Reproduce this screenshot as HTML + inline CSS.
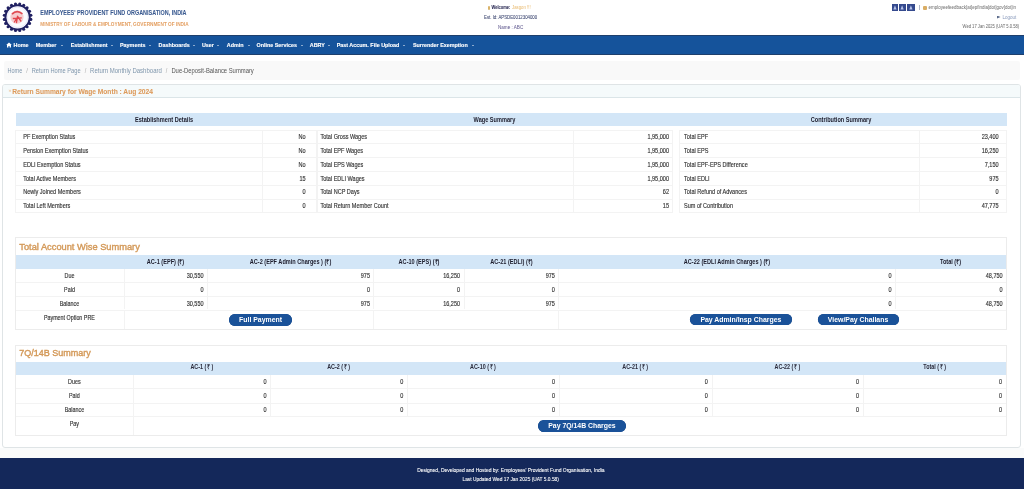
<!DOCTYPE html><html><head><meta charset="utf-8"><title>Due-Deposit-Balance Summary</title><style>
html,body{margin:0;padding:0;}body{width:1024px;height:489px;overflow:hidden;position:relative;background:#fff;font-family:"Liberation Sans", sans-serif;}
.t{position:absolute;white-space:nowrap;}.r{position:absolute;}
</style></head><body><div class="r" style="left:0;top:0;width:1024px;height:489px;will-change:transform">
<svg class="r" style="left:0;top:0" width="36" height="35" viewBox="0 0 36 35"><circle cx="30.84" cy="19.40" r="1.55" fill="#202062"/><circle cx="29.54" cy="23.38" r="1.55" fill="#202062"/><circle cx="27.08" cy="26.78" r="1.55" fill="#202062"/><circle cx="23.68" cy="29.24" r="1.55" fill="#202062"/><circle cx="19.70" cy="30.54" r="1.55" fill="#202062"/><circle cx="15.50" cy="30.54" r="1.55" fill="#202062"/><circle cx="11.52" cy="29.24" r="1.55" fill="#202062"/><circle cx="8.12" cy="26.78" r="1.55" fill="#202062"/><circle cx="5.66" cy="23.38" r="1.55" fill="#202062"/><circle cx="4.36" cy="19.40" r="1.55" fill="#202062"/><circle cx="4.36" cy="15.20" r="1.55" fill="#202062"/><circle cx="5.66" cy="11.22" r="1.55" fill="#202062"/><circle cx="8.12" cy="7.82" r="1.55" fill="#202062"/><circle cx="11.52" cy="5.36" r="1.55" fill="#202062"/><circle cx="15.50" cy="4.06" r="1.55" fill="#202062"/><circle cx="19.70" cy="4.06" r="1.55" fill="#202062"/><circle cx="23.68" cy="5.36" r="1.55" fill="#202062"/><circle cx="27.08" cy="7.82" r="1.55" fill="#202062"/><circle cx="29.54" cy="11.22" r="1.55" fill="#202062"/><circle cx="30.84" cy="15.20" r="1.55" fill="#202062"/><circle cx="17.6" cy="17.3" r="13.1" fill="#202062"/><circle cx="17.6" cy="17.3" r="11.1" fill="#fbfbff"/><circle cx="17.6" cy="17.3" r="10.2" fill="none" stroke="#d6d6ee" stroke-width="0.5"/><circle cx="17.0" cy="17.1" r="6.6" fill="#f6cdd0"/><path d="M12.000000000000002,14.100000000000001 Q17.1,9.100000000000001 22.400000000000002,13.9" fill="none" stroke="#e04a52" stroke-width="1.7"/><path d="M14.100000000000001,22.5 L17.8,16.7 L21.200000000000003,21.5 M12.8,18.5 L21.8,17.900000000000002 M17.6,15.8 L16.400000000000002,23.1" fill="none" stroke="#e2444c" stroke-width="1.3"/></svg>
<div class="t" style="left:40.30px;top:7.80px;font-size:5.45px;line-height:10px;height:10px;color:#3a5a90;font-weight:bold;transform:scaleY(1.18);-webkit-text-stroke:0.05px #3a5a90;">EMPLOYEES&#39; PROVIDENT FUND ORGANISATION, INDIA</div>
<div class="t" style="left:40.30px;top:20.20px;font-size:4.71px;line-height:10px;height:10px;color:#e4a063;font-weight:bold;transform:scaleY(1.18);">MINISTRY OF LABOUR &amp; EMPLOYMENT, GOVERNMENT OF INDIA</div>
<div class="r" style="left:487.50px;top:5.50px;width:2.50px;height:4.00px;background:#d9b36a;border-radius:1px;"></div>
<div class="t" style="left:491.50px;top:3.30px;font-size:4.02px;line-height:10px;height:10px;color:#2b2b55;font-weight:bold;transform:scaleY(1.18);-webkit-text-stroke:0.05px #2b2b55;">Welcome:</div>
<div class="t" style="left:512.00px;top:3.30px;font-size:4.3px;line-height:10px;height:10px;color:#e8b86a;font-weight:normal;transform:scaleY(1.18);">Jasgon !!!</div>
<div class="t" style="left:484.00px;top:13.30px;font-size:4.33px;line-height:10px;height:10px;color:#3c4670;font-weight:normal;transform:scaleY(1.18);-webkit-text-stroke:0.05px #3c4670;">Est. Id: APSDE0012304000</div>
<div class="t" style="left:498.00px;top:22.60px;font-size:4.58px;line-height:10px;height:10px;color:#6a6496;font-weight:normal;transform:scaleY(1.18);-webkit-text-stroke:0.05px #6a6496;">Name : ABC</div>
<div class="r" style="left:891.60px;top:4.30px;width:6.00px;height:6.30px;background:#354a8e;"></div>
<svg class="r" style="left:891.60px;top:4.3px" width="6.0" height="6.3" viewBox="0 0 6.0 6.3"><path d="M1.4,5.6 L3.0,1.2 L4.6,5.6 Z" fill="#b8c4ea"/></svg>
<div class="r" style="left:899.40px;top:4.30px;width:6.20px;height:6.30px;background:#354a8e;"></div>
<svg class="r" style="left:899.40px;top:4.3px" width="6.2" height="6.3" viewBox="0 0 6.2 6.3"><path d="M1.5,5.6 L3.1,1.2 L4.7,5.6 Z" fill="#b8c4ea"/></svg>
<div class="r" style="left:907.10px;top:4.30px;width:7.80px;height:6.30px;background:#354a8e;"></div>
<svg class="r" style="left:907.10px;top:4.3px" width="7.8" height="6.3" viewBox="0 0 7.8 6.3"><path d="M2.3,5.6 L3.9,1.2 L5.5,5.6 Z" fill="#b8c4ea"/></svg>
<div class="r" style="left:919.30px;top:4.60px;width:0.60px;height:5.00px;background:#b0b8c8;"></div>
<div class="r" style="left:922.80px;top:5.50px;width:4.70px;height:4.60px;background:#d9ad64;border-radius:1px;"></div>
<div class="t" style="left:928.50px;top:3.40px;font-size:4.49px;line-height:10px;height:10px;color:#757575;font-weight:normal;transform:scaleY(1.18);-webkit-text-stroke:0.03px #757575;">employeefeedback[at]epfindia[dot]gov[dot]in</div>
<div class="r" style="left:997.00px;top:15.60px;width:3.50px;height:3.00px;background:#5a6a8a;clip-path:polygon(0 0,100% 50%,0 100%);"></div>
<div class="t" style="left:1002.40px;top:13.00px;font-size:4.58px;line-height:10px;height:10px;color:#8899bb;font-weight:normal;transform:scaleY(1.18);">Logout</div>
<div class="t" style="right:4.80px;top:22.10px;font-size:4.14px;line-height:10px;height:10px;color:#707070;font-weight:normal;transform:scaleY(1.18);-webkit-text-stroke:0.03px #707070;">Wed 17 Jan 2025 (UAT 5.0.58)</div>
<div class="r" style="left:0.00px;top:35.00px;width:1024.00px;height:19.50px;background:#15539b;border-top:1px solid #1e3f6c;border-bottom:1px solid #1e3f6c;box-sizing:border-box;"></div>
<svg class="r" style="left:6.3px;top:42.2px" width="6" height="6" viewBox="0 0 6 6"><path d="M0.2,3 L3,0.4 L5.8,3 L5,3 L5,5.6 L3.6,5.6 L3.6,4 L2.4,4 L2.4,5.6 L1,5.6 L1,3 Z" fill="#fff"/></svg>
<div class="t" style="left:13.50px;top:40.10px;font-size:5.4px;line-height:10px;height:10px;color:#ffffff;font-weight:bold;transform:scaleY(1.1);-webkit-text-stroke:0.12px #ffffff;">Home</div>
<div class="t" style="left:35.70px;top:40.10px;font-size:5.4px;line-height:10px;height:10px;color:#ffffff;font-weight:bold;transform:scaleY(1.1);-webkit-text-stroke:0.12px #ffffff;">Member</div>
<div class="r" style="left:61.00px;top:44.6px;width:0;height:0;border-left:1.5px solid transparent;border-right:1.5px solid transparent;border-top:1.7px solid #fff;"></div>
<div class="t" style="left:70.70px;top:40.10px;font-size:5.4px;line-height:10px;height:10px;color:#ffffff;font-weight:bold;transform:scaleY(1.1);-webkit-text-stroke:0.12px #ffffff;">Establishment</div>
<div class="r" style="left:110.50px;top:44.6px;width:0;height:0;border-left:1.5px solid transparent;border-right:1.5px solid transparent;border-top:1.7px solid #fff;"></div>
<div class="t" style="left:120.00px;top:40.10px;font-size:5.4px;line-height:10px;height:10px;color:#ffffff;font-weight:bold;transform:scaleY(1.1);-webkit-text-stroke:0.12px #ffffff;">Payments</div>
<div class="r" style="left:148.90px;top:44.6px;width:0;height:0;border-left:1.5px solid transparent;border-right:1.5px solid transparent;border-top:1.7px solid #fff;"></div>
<div class="t" style="left:158.60px;top:40.10px;font-size:5.4px;line-height:10px;height:10px;color:#ffffff;font-weight:bold;transform:scaleY(1.1);-webkit-text-stroke:0.12px #ffffff;">Dashboards</div>
<div class="r" style="left:192.80px;top:44.6px;width:0;height:0;border-left:1.5px solid transparent;border-right:1.5px solid transparent;border-top:1.7px solid #fff;"></div>
<div class="t" style="left:201.90px;top:40.10px;font-size:5.4px;line-height:10px;height:10px;color:#ffffff;font-weight:bold;transform:scaleY(1.1);-webkit-text-stroke:0.12px #ffffff;">User</div>
<div class="r" style="left:216.80px;top:44.6px;width:0;height:0;border-left:1.5px solid transparent;border-right:1.5px solid transparent;border-top:1.7px solid #fff;"></div>
<div class="t" style="left:226.80px;top:40.10px;font-size:5.4px;line-height:10px;height:10px;color:#ffffff;font-weight:bold;transform:scaleY(1.1);-webkit-text-stroke:0.12px #ffffff;">Admin</div>
<div class="r" style="left:247.50px;top:44.6px;width:0;height:0;border-left:1.5px solid transparent;border-right:1.5px solid transparent;border-top:1.7px solid #fff;"></div>
<div class="t" style="left:256.50px;top:40.10px;font-size:5.4px;line-height:10px;height:10px;color:#ffffff;font-weight:bold;transform:scaleY(1.1);-webkit-text-stroke:0.12px #ffffff;">Online Services</div>
<div class="r" style="left:300.50px;top:44.6px;width:0;height:0;border-left:1.5px solid transparent;border-right:1.5px solid transparent;border-top:1.7px solid #fff;"></div>
<div class="t" style="left:309.80px;top:40.10px;font-size:5.4px;line-height:10px;height:10px;color:#ffffff;font-weight:bold;transform:scaleY(1.1);-webkit-text-stroke:0.12px #ffffff;">ABRY</div>
<div class="r" style="left:327.50px;top:44.6px;width:0;height:0;border-left:1.5px solid transparent;border-right:1.5px solid transparent;border-top:1.7px solid #fff;"></div>
<div class="t" style="left:336.70px;top:40.10px;font-size:5.4px;line-height:10px;height:10px;color:#ffffff;font-weight:bold;transform:scaleY(1.1);-webkit-text-stroke:0.12px #ffffff;">Past Accum. File Upload</div>
<div class="r" style="left:403.10px;top:44.6px;width:0;height:0;border-left:1.5px solid transparent;border-right:1.5px solid transparent;border-top:1.7px solid #fff;"></div>
<div class="t" style="left:412.90px;top:40.10px;font-size:5.4px;line-height:10px;height:10px;color:#ffffff;font-weight:bold;transform:scaleY(1.1);-webkit-text-stroke:0.12px #ffffff;">Surrender Exemption</div>
<div class="r" style="left:471.50px;top:44.6px;width:0;height:0;border-left:1.5px solid transparent;border-right:1.5px solid transparent;border-top:1.7px solid #fff;"></div>
<div class="r" style="left:4.00px;top:61.00px;width:1016.30px;height:19.00px;background:#f9f9f9;border-radius:2px;"></div>
<div class="t" style="left:7.60px;top:65.60px;font-size:5.51px;line-height:10px;height:10px;color:#7f96ac;font-weight:normal;transform:scaleY(1.18);">Home</div>
<div class="t" style="left:26.20px;top:65.60px;font-size:5.6px;line-height:10px;height:10px;color:#aaaaaa;font-weight:normal;transform:scaleY(1.18);">/</div>
<div class="t" style="left:31.70px;top:65.60px;font-size:5.72px;line-height:10px;height:10px;color:#7f96ac;font-weight:normal;transform:scaleY(1.18);">Return Home Page</div>
<div class="t" style="left:84.80px;top:65.60px;font-size:5.6px;line-height:10px;height:10px;color:#aaaaaa;font-weight:normal;transform:scaleY(1.18);">/</div>
<div class="t" style="left:90.10px;top:65.60px;font-size:6.0px;line-height:10px;height:10px;color:#7f96ac;font-weight:normal;transform:scaleY(1.18);">Return Monthly Dashboard</div>
<div class="t" style="left:165.80px;top:65.60px;font-size:5.6px;line-height:10px;height:10px;color:#aaaaaa;font-weight:normal;transform:scaleY(1.18);">/</div>
<div class="t" style="left:171.40px;top:65.60px;font-size:5.87px;line-height:10px;height:10px;color:#555555;font-weight:normal;transform:scaleY(1.18);">Due-Deposit-Balance Summary</div>
<div class="r" style="left:1.50px;top:84.00px;width:1019.30px;height:364.00px;background:#ffffff;border:1px solid #dfe4e6;border-radius:3px;box-sizing:border-box;"></div>
<div class="r" style="left:2.50px;top:85.00px;width:1017.30px;height:13.00px;background:#f5fafb;border-bottom:1px solid #dbe5e8;box-sizing:border-box;border-radius:2px 2px 0 0;"></div>
<div class="t" style="left:8.40px;top:84.80px;font-size:5.0px;line-height:10px;height:10px;color:#efc090;font-weight:normal;transform:scaleY(1.18);">&#187;</div>
<div class="t" style="left:12.20px;top:86.90px;font-size:6.66px;line-height:10px;height:10px;color:#dd9b5c;font-weight:bold;transform:scaleY(1.12);-webkit-text-stroke:0.08px #dd9b5c;">Return Summary for Wage Month : Aug 2024</div>
<div class="r" style="left:15.50px;top:113.00px;width:991.00px;height:13.00px;background:#d3e6f7;"></div>
<div class="t" style="left:-136.00px;width:600px;text-align:center;top:114.60px;font-size:5.6px;line-height:10px;height:10px;color:#1c1c2c;font-weight:bold;transform:scaleY(1.18);">Establishment Details</div>
<div class="t" style="left:194.50px;width:600px;text-align:center;top:114.60px;font-size:5.6px;line-height:10px;height:10px;color:#1c1c2c;font-weight:bold;transform:scaleY(1.18);">Wage Summary</div>
<div class="t" style="left:541.00px;width:600px;text-align:center;top:114.60px;font-size:5.6px;line-height:10px;height:10px;color:#1c1c2c;font-weight:bold;transform:scaleY(1.18);">Contribution Summary</div>
<div class="r" style="left:15.00px;top:129.50px;width:302.00px;height:1.00px;background:#f3f3f3;"></div>
<div class="r" style="left:15.00px;top:143.30px;width:302.00px;height:1.00px;background:#f3f3f3;"></div>
<div class="r" style="left:15.00px;top:157.10px;width:302.00px;height:1.00px;background:#f3f3f3;"></div>
<div class="r" style="left:15.00px;top:170.90px;width:302.00px;height:1.00px;background:#f3f3f3;"></div>
<div class="r" style="left:15.00px;top:184.70px;width:302.00px;height:1.00px;background:#f3f3f3;"></div>
<div class="r" style="left:15.00px;top:198.50px;width:302.00px;height:1.00px;background:#f3f3f3;"></div>
<div class="r" style="left:15.00px;top:212.30px;width:302.00px;height:1.00px;background:#f3f3f3;"></div>
<div class="r" style="left:15.00px;top:129.50px;width:1.00px;height:82.80px;background:#f3f3f3;"></div>
<div class="r" style="left:262.00px;top:129.50px;width:1.00px;height:82.80px;background:#f3f3f3;"></div>
<div class="r" style="left:316.00px;top:129.50px;width:1.00px;height:82.80px;background:#f3f3f3;"></div>
<div class="r" style="left:316.50px;top:129.50px;width:356.00px;height:1.00px;background:#f3f3f3;"></div>
<div class="r" style="left:316.50px;top:143.30px;width:356.00px;height:1.00px;background:#f3f3f3;"></div>
<div class="r" style="left:316.50px;top:157.10px;width:356.00px;height:1.00px;background:#f3f3f3;"></div>
<div class="r" style="left:316.50px;top:170.90px;width:356.00px;height:1.00px;background:#f3f3f3;"></div>
<div class="r" style="left:316.50px;top:184.70px;width:356.00px;height:1.00px;background:#f3f3f3;"></div>
<div class="r" style="left:316.50px;top:198.50px;width:356.00px;height:1.00px;background:#f3f3f3;"></div>
<div class="r" style="left:316.50px;top:212.30px;width:356.00px;height:1.00px;background:#f3f3f3;"></div>
<div class="r" style="left:316.50px;top:129.50px;width:1.00px;height:82.80px;background:#f3f3f3;"></div>
<div class="r" style="left:573.00px;top:129.50px;width:1.00px;height:82.80px;background:#f3f3f3;"></div>
<div class="r" style="left:671.50px;top:129.50px;width:1.00px;height:82.80px;background:#f3f3f3;"></div>
<div class="r" style="left:679.00px;top:129.50px;width:327.50px;height:1.00px;background:#f3f3f3;"></div>
<div class="r" style="left:679.00px;top:143.30px;width:327.50px;height:1.00px;background:#f3f3f3;"></div>
<div class="r" style="left:679.00px;top:157.10px;width:327.50px;height:1.00px;background:#f3f3f3;"></div>
<div class="r" style="left:679.00px;top:170.90px;width:327.50px;height:1.00px;background:#f3f3f3;"></div>
<div class="r" style="left:679.00px;top:184.70px;width:327.50px;height:1.00px;background:#f3f3f3;"></div>
<div class="r" style="left:679.00px;top:198.50px;width:327.50px;height:1.00px;background:#f3f3f3;"></div>
<div class="r" style="left:679.00px;top:212.30px;width:327.50px;height:1.00px;background:#f3f3f3;"></div>
<div class="r" style="left:679.00px;top:129.50px;width:1.00px;height:82.80px;background:#f3f3f3;"></div>
<div class="r" style="left:919.00px;top:129.50px;width:1.00px;height:82.80px;background:#f3f3f3;"></div>
<div class="r" style="left:1005.50px;top:129.50px;width:1.00px;height:82.80px;background:#f3f3f3;"></div>
<div class="t" style="left:23.20px;top:132.20px;font-size:5.55px;line-height:10px;height:10px;color:#333333;font-weight:normal;transform:scaleY(1.18);-webkit-text-stroke:0.12px #333333;">PF Exemption Status</div>
<div class="t" style="right:718.40px;top:132.20px;font-size:5.55px;line-height:10px;height:10px;color:#333333;font-weight:normal;transform:scaleY(1.18);-webkit-text-stroke:0.12px #333333;">No</div>
<div class="t" style="left:23.20px;top:146.00px;font-size:5.55px;line-height:10px;height:10px;color:#333333;font-weight:normal;transform:scaleY(1.18);-webkit-text-stroke:0.12px #333333;">Pension Exemption Status</div>
<div class="t" style="right:718.40px;top:146.00px;font-size:5.55px;line-height:10px;height:10px;color:#333333;font-weight:normal;transform:scaleY(1.18);-webkit-text-stroke:0.12px #333333;">No</div>
<div class="t" style="left:23.20px;top:160.00px;font-size:5.55px;line-height:10px;height:10px;color:#333333;font-weight:normal;transform:scaleY(1.18);-webkit-text-stroke:0.12px #333333;">EDLI Exemption Status</div>
<div class="t" style="right:718.40px;top:160.00px;font-size:5.55px;line-height:10px;height:10px;color:#333333;font-weight:normal;transform:scaleY(1.18);-webkit-text-stroke:0.12px #333333;">No</div>
<div class="t" style="left:23.20px;top:173.60px;font-size:5.55px;line-height:10px;height:10px;color:#333333;font-weight:normal;transform:scaleY(1.18);-webkit-text-stroke:0.12px #333333;">Total Active Members</div>
<div class="t" style="right:718.40px;top:173.60px;font-size:5.55px;line-height:10px;height:10px;color:#333333;font-weight:normal;transform:scaleY(1.18);-webkit-text-stroke:0.12px #333333;">15</div>
<div class="t" style="left:23.20px;top:187.40px;font-size:5.55px;line-height:10px;height:10px;color:#333333;font-weight:normal;transform:scaleY(1.18);-webkit-text-stroke:0.12px #333333;">Newly Joined Members</div>
<div class="t" style="right:718.40px;top:187.40px;font-size:5.55px;line-height:10px;height:10px;color:#333333;font-weight:normal;transform:scaleY(1.18);-webkit-text-stroke:0.12px #333333;">0</div>
<div class="t" style="left:23.20px;top:201.20px;font-size:5.55px;line-height:10px;height:10px;color:#333333;font-weight:normal;transform:scaleY(1.18);-webkit-text-stroke:0.12px #333333;">Total Left Members</div>
<div class="t" style="right:718.40px;top:201.20px;font-size:5.55px;line-height:10px;height:10px;color:#333333;font-weight:normal;transform:scaleY(1.18);-webkit-text-stroke:0.12px #333333;">0</div>
<div class="t" style="left:320.40px;top:132.20px;font-size:5.55px;line-height:10px;height:10px;color:#333333;font-weight:normal;transform:scaleY(1.18);-webkit-text-stroke:0.12px #333333;">Total Gross Wages</div>
<div class="t" style="right:355.00px;top:132.20px;font-size:5.55px;line-height:10px;height:10px;color:#333333;font-weight:normal;transform:scaleY(1.18);-webkit-text-stroke:0.12px #333333;">1,95,000</div>
<div class="t" style="left:320.40px;top:146.00px;font-size:5.55px;line-height:10px;height:10px;color:#333333;font-weight:normal;transform:scaleY(1.18);-webkit-text-stroke:0.12px #333333;">Total EPF Wages</div>
<div class="t" style="right:355.00px;top:146.00px;font-size:5.55px;line-height:10px;height:10px;color:#333333;font-weight:normal;transform:scaleY(1.18);-webkit-text-stroke:0.12px #333333;">1,95,000</div>
<div class="t" style="left:320.40px;top:160.00px;font-size:5.55px;line-height:10px;height:10px;color:#333333;font-weight:normal;transform:scaleY(1.18);-webkit-text-stroke:0.12px #333333;">Total EPS Wages</div>
<div class="t" style="right:355.00px;top:160.00px;font-size:5.55px;line-height:10px;height:10px;color:#333333;font-weight:normal;transform:scaleY(1.18);-webkit-text-stroke:0.12px #333333;">1,95,000</div>
<div class="t" style="left:320.40px;top:173.60px;font-size:5.55px;line-height:10px;height:10px;color:#333333;font-weight:normal;transform:scaleY(1.18);-webkit-text-stroke:0.12px #333333;">Total EDLI Wages</div>
<div class="t" style="right:355.00px;top:173.60px;font-size:5.55px;line-height:10px;height:10px;color:#333333;font-weight:normal;transform:scaleY(1.18);-webkit-text-stroke:0.12px #333333;">1,95,000</div>
<div class="t" style="left:320.40px;top:187.40px;font-size:5.55px;line-height:10px;height:10px;color:#333333;font-weight:normal;transform:scaleY(1.18);-webkit-text-stroke:0.12px #333333;">Total NCP Days</div>
<div class="t" style="right:355.00px;top:187.40px;font-size:5.55px;line-height:10px;height:10px;color:#333333;font-weight:normal;transform:scaleY(1.18);-webkit-text-stroke:0.12px #333333;">62</div>
<div class="t" style="left:320.40px;top:201.20px;font-size:5.55px;line-height:10px;height:10px;color:#333333;font-weight:normal;transform:scaleY(1.18);-webkit-text-stroke:0.12px #333333;">Total Return Member Count</div>
<div class="t" style="right:355.00px;top:201.20px;font-size:5.55px;line-height:10px;height:10px;color:#333333;font-weight:normal;transform:scaleY(1.18);-webkit-text-stroke:0.12px #333333;">15</div>
<div class="t" style="left:684.00px;top:132.20px;font-size:5.55px;line-height:10px;height:10px;color:#333333;font-weight:normal;transform:scaleY(1.18);-webkit-text-stroke:0.12px #333333;">Total EPF</div>
<div class="t" style="right:25.40px;top:132.20px;font-size:5.55px;line-height:10px;height:10px;color:#333333;font-weight:normal;transform:scaleY(1.18);-webkit-text-stroke:0.12px #333333;">23,400</div>
<div class="t" style="left:684.00px;top:146.00px;font-size:5.55px;line-height:10px;height:10px;color:#333333;font-weight:normal;transform:scaleY(1.18);-webkit-text-stroke:0.12px #333333;">Total EPS</div>
<div class="t" style="right:25.40px;top:146.00px;font-size:5.55px;line-height:10px;height:10px;color:#333333;font-weight:normal;transform:scaleY(1.18);-webkit-text-stroke:0.12px #333333;">16,250</div>
<div class="t" style="left:684.00px;top:160.00px;font-size:5.55px;line-height:10px;height:10px;color:#333333;font-weight:normal;transform:scaleY(1.18);-webkit-text-stroke:0.12px #333333;">Total EPF-EPS Difference</div>
<div class="t" style="right:25.40px;top:160.00px;font-size:5.55px;line-height:10px;height:10px;color:#333333;font-weight:normal;transform:scaleY(1.18);-webkit-text-stroke:0.12px #333333;">7,150</div>
<div class="t" style="left:684.00px;top:173.60px;font-size:5.55px;line-height:10px;height:10px;color:#333333;font-weight:normal;transform:scaleY(1.18);-webkit-text-stroke:0.12px #333333;">Total EDLI</div>
<div class="t" style="right:25.40px;top:173.60px;font-size:5.55px;line-height:10px;height:10px;color:#333333;font-weight:normal;transform:scaleY(1.18);-webkit-text-stroke:0.12px #333333;">975</div>
<div class="t" style="left:684.00px;top:187.40px;font-size:5.55px;line-height:10px;height:10px;color:#333333;font-weight:normal;transform:scaleY(1.18);-webkit-text-stroke:0.12px #333333;">Total Refund of Advances</div>
<div class="t" style="right:25.40px;top:187.40px;font-size:5.55px;line-height:10px;height:10px;color:#333333;font-weight:normal;transform:scaleY(1.18);-webkit-text-stroke:0.12px #333333;">0</div>
<div class="t" style="left:684.00px;top:201.20px;font-size:5.55px;line-height:10px;height:10px;color:#333333;font-weight:normal;transform:scaleY(1.18);-webkit-text-stroke:0.12px #333333;">Sum of Contribution</div>
<div class="t" style="right:25.40px;top:201.20px;font-size:5.55px;line-height:10px;height:10px;color:#333333;font-weight:normal;transform:scaleY(1.18);-webkit-text-stroke:0.12px #333333;">47,775</div>
<div class="r" style="left:15.00px;top:237.00px;width:991.50px;height:92.50px;background:#ffffff;border:1px solid #ececec;box-sizing:border-box;"></div>
<div class="t" style="left:19.30px;top:242.00px;font-size:9.28px;line-height:10px;height:10px;color:#d49a5a;font-weight:normal;transform:scaleY(1.05);-webkit-text-stroke:0.4px #d49a5a;">Total Account Wise Summary</div>
<div class="r" style="left:15.50px;top:255.30px;width:990.50px;height:14.00px;background:#d3e6f7;"></div>
<div class="t" style="left:-134.50px;width:600px;text-align:center;top:256.90px;font-size:5.58px;line-height:10px;height:10px;color:#1c1c2c;font-weight:bold;transform:scaleY(1.18);">AC-1 (EPF) (&#8377;)</div>
<div class="t" style="left:-9.50px;width:600px;text-align:center;top:256.90px;font-size:5.58px;line-height:10px;height:10px;color:#1c1c2c;font-weight:bold;transform:scaleY(1.18);">AC-2 (EPF Admin Charges ) (&#8377;)</div>
<div class="t" style="left:119.00px;width:600px;text-align:center;top:256.90px;font-size:5.58px;line-height:10px;height:10px;color:#1c1c2c;font-weight:bold;transform:scaleY(1.18);">AC-10 (EPS) (&#8377;)</div>
<div class="t" style="left:211.50px;width:600px;text-align:center;top:256.90px;font-size:5.58px;line-height:10px;height:10px;color:#1c1c2c;font-weight:bold;transform:scaleY(1.18);">AC-21 (EDLI) (&#8377;)</div>
<div class="t" style="left:427.00px;width:600px;text-align:center;top:256.90px;font-size:5.58px;line-height:10px;height:10px;color:#1c1c2c;font-weight:bold;transform:scaleY(1.18);">AC-22 (EDLI Admin Charges ) (&#8377;)</div>
<div class="t" style="left:650.50px;width:600px;text-align:center;top:256.90px;font-size:5.58px;line-height:10px;height:10px;color:#1c1c2c;font-weight:bold;transform:scaleY(1.18);">Total (&#8377;)</div>
<div class="r" style="left:15.50px;top:282.30px;width:990.50px;height:1.00px;background:#f3f3f3;"></div>
<div class="r" style="left:15.50px;top:296.10px;width:990.50px;height:1.00px;background:#f3f3f3;"></div>
<div class="r" style="left:15.50px;top:309.50px;width:990.50px;height:1.00px;background:#f3f3f3;"></div>
<div class="r" style="left:124.00px;top:269.30px;width:1.00px;height:40.20px;background:#f3f3f3;"></div>
<div class="r" style="left:207.00px;top:269.30px;width:1.00px;height:40.20px;background:#f3f3f3;"></div>
<div class="r" style="left:373.00px;top:269.30px;width:1.00px;height:40.20px;background:#f3f3f3;"></div>
<div class="r" style="left:463.60px;top:269.30px;width:1.00px;height:40.20px;background:#f3f3f3;"></div>
<div class="r" style="left:558.00px;top:269.30px;width:1.00px;height:40.20px;background:#f3f3f3;"></div>
<div class="r" style="left:895.00px;top:269.30px;width:1.00px;height:40.20px;background:#f3f3f3;"></div>
<div class="r" style="left:124.00px;top:309.50px;width:1.00px;height:19.50px;background:#f3f3f3;"></div>
<div class="r" style="left:373.00px;top:309.50px;width:1.00px;height:19.50px;background:#f3f3f3;"></div>
<div class="r" style="left:558.00px;top:309.50px;width:1.00px;height:19.50px;background:#f3f3f3;"></div>
<div class="t" style="left:-230.50px;width:600px;text-align:center;top:271.30px;font-size:5.4px;line-height:10px;height:10px;color:#333333;font-weight:normal;transform:scaleY(1.18);-webkit-text-stroke:0.12px #333333;">Due</div>
<div class="t" style="left:-230.50px;width:600px;text-align:center;top:285.00px;font-size:5.4px;line-height:10px;height:10px;color:#333333;font-weight:normal;transform:scaleY(1.18);-webkit-text-stroke:0.12px #333333;">Paid</div>
<div class="t" style="left:-230.50px;width:600px;text-align:center;top:298.60px;font-size:5.4px;line-height:10px;height:10px;color:#333333;font-weight:normal;transform:scaleY(1.18);-webkit-text-stroke:0.12px #333333;">Balance</div>
<div class="t" style="left:-230.60px;width:600px;text-align:center;top:312.70px;font-size:5.36px;line-height:10px;height:10px;color:#333333;font-weight:normal;transform:scaleY(1.18);-webkit-text-stroke:0.12px #333333;">Payment Option PRE</div>
<div class="t" style="right:820.50px;top:271.30px;font-size:5.5px;line-height:10px;height:10px;color:#333333;font-weight:normal;transform:scaleY(1.18);-webkit-text-stroke:0.12px #333333;">30,550</div>
<div class="t" style="right:654.00px;top:271.30px;font-size:5.5px;line-height:10px;height:10px;color:#333333;font-weight:normal;transform:scaleY(1.18);-webkit-text-stroke:0.12px #333333;">975</div>
<div class="t" style="right:564.00px;top:271.30px;font-size:5.5px;line-height:10px;height:10px;color:#333333;font-weight:normal;transform:scaleY(1.18);-webkit-text-stroke:0.12px #333333;">16,250</div>
<div class="t" style="right:469.20px;top:271.30px;font-size:5.5px;line-height:10px;height:10px;color:#333333;font-weight:normal;transform:scaleY(1.18);-webkit-text-stroke:0.12px #333333;">975</div>
<div class="t" style="right:132.50px;top:271.30px;font-size:5.5px;line-height:10px;height:10px;color:#333333;font-weight:normal;transform:scaleY(1.18);-webkit-text-stroke:0.12px #333333;">0</div>
<div class="t" style="right:21.40px;top:271.30px;font-size:5.5px;line-height:10px;height:10px;color:#333333;font-weight:normal;transform:scaleY(1.18);-webkit-text-stroke:0.12px #333333;">48,750</div>
<div class="t" style="right:820.50px;top:285.00px;font-size:5.5px;line-height:10px;height:10px;color:#333333;font-weight:normal;transform:scaleY(1.18);-webkit-text-stroke:0.12px #333333;">0</div>
<div class="t" style="right:654.00px;top:285.00px;font-size:5.5px;line-height:10px;height:10px;color:#333333;font-weight:normal;transform:scaleY(1.18);-webkit-text-stroke:0.12px #333333;">0</div>
<div class="t" style="right:564.00px;top:285.00px;font-size:5.5px;line-height:10px;height:10px;color:#333333;font-weight:normal;transform:scaleY(1.18);-webkit-text-stroke:0.12px #333333;">0</div>
<div class="t" style="right:469.20px;top:285.00px;font-size:5.5px;line-height:10px;height:10px;color:#333333;font-weight:normal;transform:scaleY(1.18);-webkit-text-stroke:0.12px #333333;">0</div>
<div class="t" style="right:132.50px;top:285.00px;font-size:5.5px;line-height:10px;height:10px;color:#333333;font-weight:normal;transform:scaleY(1.18);-webkit-text-stroke:0.12px #333333;">0</div>
<div class="t" style="right:21.40px;top:285.00px;font-size:5.5px;line-height:10px;height:10px;color:#333333;font-weight:normal;transform:scaleY(1.18);-webkit-text-stroke:0.12px #333333;">0</div>
<div class="t" style="right:820.50px;top:298.60px;font-size:5.5px;line-height:10px;height:10px;color:#333333;font-weight:normal;transform:scaleY(1.18);-webkit-text-stroke:0.12px #333333;">30,550</div>
<div class="t" style="right:654.00px;top:298.60px;font-size:5.5px;line-height:10px;height:10px;color:#333333;font-weight:normal;transform:scaleY(1.18);-webkit-text-stroke:0.12px #333333;">975</div>
<div class="t" style="right:564.00px;top:298.60px;font-size:5.5px;line-height:10px;height:10px;color:#333333;font-weight:normal;transform:scaleY(1.18);-webkit-text-stroke:0.12px #333333;">16,250</div>
<div class="t" style="right:469.20px;top:298.60px;font-size:5.5px;line-height:10px;height:10px;color:#333333;font-weight:normal;transform:scaleY(1.18);-webkit-text-stroke:0.12px #333333;">975</div>
<div class="t" style="right:132.50px;top:298.60px;font-size:5.5px;line-height:10px;height:10px;color:#333333;font-weight:normal;transform:scaleY(1.18);-webkit-text-stroke:0.12px #333333;">0</div>
<div class="t" style="right:21.40px;top:298.60px;font-size:5.5px;line-height:10px;height:10px;color:#333333;font-weight:normal;transform:scaleY(1.18);-webkit-text-stroke:0.12px #333333;">48,750</div>
<div class="t" style="left:229.20px;top:314.00px;width:62.70px;height:11.70px;border-radius:6px;background:#1a5299;color:#fff;font-weight:bold;font-size:6.9px;line-height:11.70px;text-align:center;box-shadow:0 0 0.6px #0e3a78;">Full Payment</div>
<div class="t" style="left:690.10px;top:314.30px;width:101.50px;height:11.20px;border-radius:6px;background:#1a5299;color:#fff;font-weight:bold;font-size:6.9px;line-height:11.20px;text-align:center;box-shadow:0 0 0.6px #0e3a78;">Pay Admin/Insp Charges</div>
<div class="t" style="left:817.50px;top:314.30px;width:81.10px;height:11.20px;border-radius:6px;background:#1a5299;color:#fff;font-weight:bold;font-size:6.9px;line-height:11.20px;text-align:center;box-shadow:0 0 0.6px #0e3a78;">View/Pay Challans</div>
<div class="r" style="left:15.00px;top:345.00px;width:991.50px;height:90.50px;background:#ffffff;border:1px solid #ececec;box-sizing:border-box;"></div>
<div class="t" style="left:19.30px;top:347.80px;font-size:9.01px;line-height:10px;height:10px;color:#d49a5a;font-weight:normal;transform:scaleY(1.05);-webkit-text-stroke:0.4px #d49a5a;">7Q/14B Summary</div>
<div class="r" style="left:15.50px;top:361.50px;width:990.50px;height:13.00px;background:#d3e6f7;"></div>
<div class="t" style="left:-98.15px;width:600px;text-align:center;top:362.40px;font-size:5.4px;line-height:10px;height:10px;color:#2a2a3a;font-weight:bold;transform:scaleY(1.18);">AC-1 (&#8201;&#8377;&#8201;)</div>
<div class="t" style="left:38.65px;width:600px;text-align:center;top:362.40px;font-size:5.4px;line-height:10px;height:10px;color:#2a2a3a;font-weight:bold;transform:scaleY(1.18);">AC-2 (&#8201;&#8377;&#8201;)</div>
<div class="t" style="left:183.00px;width:600px;text-align:center;top:362.40px;font-size:5.4px;line-height:10px;height:10px;color:#2a2a3a;font-weight:bold;transform:scaleY(1.18);">AC-10 (&#8201;&#8377;&#8201;)</div>
<div class="t" style="left:335.25px;width:600px;text-align:center;top:362.40px;font-size:5.4px;line-height:10px;height:10px;color:#2a2a3a;font-weight:bold;transform:scaleY(1.18);">AC-21 (&#8201;&#8377;&#8201;)</div>
<div class="t" style="left:487.45px;width:600px;text-align:center;top:362.40px;font-size:5.4px;line-height:10px;height:10px;color:#2a2a3a;font-weight:bold;transform:scaleY(1.18);">AC-22 (&#8201;&#8377;&#8201;)</div>
<div class="t" style="left:634.70px;width:600px;text-align:center;top:362.40px;font-size:5.4px;line-height:10px;height:10px;color:#2a2a3a;font-weight:bold;transform:scaleY(1.18);">Total (&#8201;&#8377;&#8201;)</div>
<div class="r" style="left:15.50px;top:388.40px;width:990.50px;height:1.00px;background:#f3f3f3;"></div>
<div class="r" style="left:15.50px;top:402.50px;width:990.50px;height:1.00px;background:#f3f3f3;"></div>
<div class="r" style="left:15.50px;top:416.30px;width:990.50px;height:1.00px;background:#f3f3f3;"></div>
<div class="r" style="left:133.40px;top:374.50px;width:1.00px;height:41.80px;background:#f3f3f3;"></div>
<div class="r" style="left:270.30px;top:374.50px;width:1.00px;height:41.80px;background:#f3f3f3;"></div>
<div class="r" style="left:407.00px;top:374.50px;width:1.00px;height:41.80px;background:#f3f3f3;"></div>
<div class="r" style="left:559.00px;top:374.50px;width:1.00px;height:41.80px;background:#f3f3f3;"></div>
<div class="r" style="left:711.50px;top:374.50px;width:1.00px;height:41.80px;background:#f3f3f3;"></div>
<div class="r" style="left:863.40px;top:374.50px;width:1.00px;height:41.80px;background:#f3f3f3;"></div>
<div class="r" style="left:133.40px;top:416.30px;width:1.00px;height:18.70px;background:#f3f3f3;"></div>
<div class="t" style="left:-225.60px;width:600px;text-align:center;top:377.40px;font-size:5.4px;line-height:10px;height:10px;color:#333333;font-weight:normal;transform:scaleY(1.18);-webkit-text-stroke:0.12px #333333;">Dues</div>
<div class="t" style="right:757.40px;top:377.40px;font-size:5.5px;line-height:10px;height:10px;color:#333333;font-weight:normal;transform:scaleY(1.18);-webkit-text-stroke:0.12px #333333;">0</div>
<div class="t" style="right:620.80px;top:377.40px;font-size:5.5px;line-height:10px;height:10px;color:#333333;font-weight:normal;transform:scaleY(1.18);-webkit-text-stroke:0.12px #333333;">0</div>
<div class="t" style="right:469.00px;top:377.40px;font-size:5.5px;line-height:10px;height:10px;color:#333333;font-weight:normal;transform:scaleY(1.18);-webkit-text-stroke:0.12px #333333;">0</div>
<div class="t" style="right:316.30px;top:377.40px;font-size:5.5px;line-height:10px;height:10px;color:#333333;font-weight:normal;transform:scaleY(1.18);-webkit-text-stroke:0.12px #333333;">0</div>
<div class="t" style="right:165.00px;top:377.40px;font-size:5.5px;line-height:10px;height:10px;color:#333333;font-weight:normal;transform:scaleY(1.18);-webkit-text-stroke:0.12px #333333;">0</div>
<div class="t" style="right:22.00px;top:377.40px;font-size:5.5px;line-height:10px;height:10px;color:#333333;font-weight:normal;transform:scaleY(1.18);-webkit-text-stroke:0.12px #333333;">0</div>
<div class="t" style="left:-225.60px;width:600px;text-align:center;top:391.30px;font-size:5.4px;line-height:10px;height:10px;color:#333333;font-weight:normal;transform:scaleY(1.18);-webkit-text-stroke:0.12px #333333;">Paid</div>
<div class="t" style="right:757.40px;top:391.30px;font-size:5.5px;line-height:10px;height:10px;color:#333333;font-weight:normal;transform:scaleY(1.18);-webkit-text-stroke:0.12px #333333;">0</div>
<div class="t" style="right:620.80px;top:391.30px;font-size:5.5px;line-height:10px;height:10px;color:#333333;font-weight:normal;transform:scaleY(1.18);-webkit-text-stroke:0.12px #333333;">0</div>
<div class="t" style="right:469.00px;top:391.30px;font-size:5.5px;line-height:10px;height:10px;color:#333333;font-weight:normal;transform:scaleY(1.18);-webkit-text-stroke:0.12px #333333;">0</div>
<div class="t" style="right:316.30px;top:391.30px;font-size:5.5px;line-height:10px;height:10px;color:#333333;font-weight:normal;transform:scaleY(1.18);-webkit-text-stroke:0.12px #333333;">0</div>
<div class="t" style="right:165.00px;top:391.30px;font-size:5.5px;line-height:10px;height:10px;color:#333333;font-weight:normal;transform:scaleY(1.18);-webkit-text-stroke:0.12px #333333;">0</div>
<div class="t" style="right:22.00px;top:391.30px;font-size:5.5px;line-height:10px;height:10px;color:#333333;font-weight:normal;transform:scaleY(1.18);-webkit-text-stroke:0.12px #333333;">0</div>
<div class="t" style="left:-225.60px;width:600px;text-align:center;top:405.20px;font-size:5.4px;line-height:10px;height:10px;color:#333333;font-weight:normal;transform:scaleY(1.18);-webkit-text-stroke:0.12px #333333;">Balance</div>
<div class="t" style="right:757.40px;top:405.20px;font-size:5.5px;line-height:10px;height:10px;color:#333333;font-weight:normal;transform:scaleY(1.18);-webkit-text-stroke:0.12px #333333;">0</div>
<div class="t" style="right:620.80px;top:405.20px;font-size:5.5px;line-height:10px;height:10px;color:#333333;font-weight:normal;transform:scaleY(1.18);-webkit-text-stroke:0.12px #333333;">0</div>
<div class="t" style="right:469.00px;top:405.20px;font-size:5.5px;line-height:10px;height:10px;color:#333333;font-weight:normal;transform:scaleY(1.18);-webkit-text-stroke:0.12px #333333;">0</div>
<div class="t" style="right:316.30px;top:405.20px;font-size:5.5px;line-height:10px;height:10px;color:#333333;font-weight:normal;transform:scaleY(1.18);-webkit-text-stroke:0.12px #333333;">0</div>
<div class="t" style="right:165.00px;top:405.20px;font-size:5.5px;line-height:10px;height:10px;color:#333333;font-weight:normal;transform:scaleY(1.18);-webkit-text-stroke:0.12px #333333;">0</div>
<div class="t" style="right:22.00px;top:405.20px;font-size:5.5px;line-height:10px;height:10px;color:#333333;font-weight:normal;transform:scaleY(1.18);-webkit-text-stroke:0.12px #333333;">0</div>
<div class="t" style="left:-225.60px;width:600px;text-align:center;top:418.60px;font-size:5.4px;line-height:10px;height:10px;color:#333333;font-weight:normal;transform:scaleY(1.18);-webkit-text-stroke:0.12px #333333;">Pay</div>
<div class="t" style="left:538.00px;top:419.90px;width:87.90px;height:11.70px;border-radius:6px;background:#1a5299;color:#fff;font-weight:bold;font-size:6.9px;line-height:11.70px;text-align:center;box-shadow:0 0 0.6px #0e3a78;">Pay 7Q/14B Charges</div>
<div class="r" style="left:0.00px;top:448.00px;width:1024.00px;height:10.00px;background:#fafbfb;"></div>
<div class="r" style="left:0.00px;top:457.80px;width:1024.00px;height:31.20px;background:#14285a;"></div>
<div class="t" style="left:210.85px;width:600px;text-align:center;top:465.00px;font-size:4.99px;line-height:10px;height:10px;color:#ffffff;font-weight:normal;transform:scaleY(1.15);-webkit-text-stroke:0.08px #ffffff;">Designed, Developed and Hosted by: Employees&#39; Provident Fund Organisation, India</div>
<div class="t" style="left:210.70px;width:600px;text-align:center;top:475.20px;font-size:4.84px;line-height:10px;height:10px;color:#ffffff;font-weight:normal;transform:scaleY(1.15);-webkit-text-stroke:0.08px #ffffff;">Last Updated Wed 17 Jan 2025 (UAT 5.0.58)</div>
</div></body></html>
